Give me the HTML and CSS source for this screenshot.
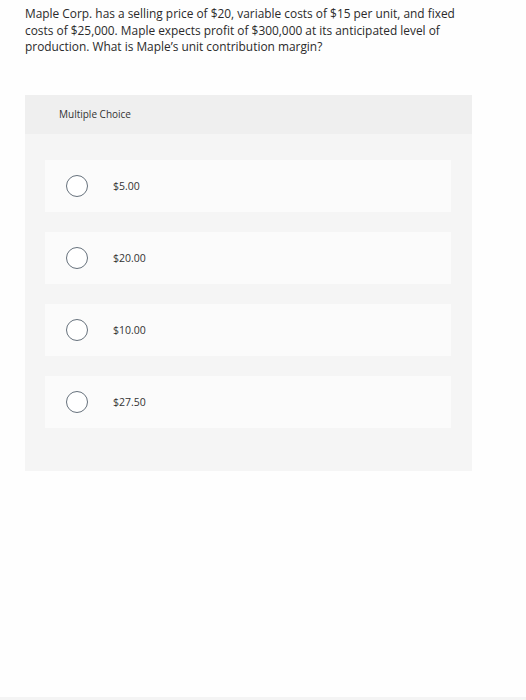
FILE: index.html
```html
<!DOCTYPE html>
<html>
<head>
<meta charset="utf-8">
<link rel="stylesheet" href="styles.css">
</head>
<body>
<div class="page">
  <p class="question">Maple Corp. has a selling price of $20, variable costs of $15 per unit, and fixed costs of $25,000. Maple expects profit of $300,000 at its anticipated level of production. What is Maple’s unit contribution margin?</p>
  <div class="panel">
    <div class="panel-head">Multiple Choice</div>
    <div class="options">
      <div class="option"><span class="radio"></span><span class="label">$5.00</span></div>
      <div class="option"><span class="radio"></span><span class="label">$20.00</span></div>
      <div class="option"><span class="radio"></span><span class="label">$10.00</span></div>
      <div class="option"><span class="radio"></span><span class="label">$27.50</span></div>
    </div>
  </div>
</div>
<div class="footer-line"></div>
</body>
</html>
```

FILE: styles.css
```css
html, body {
  margin: 0;
  padding: 0;
  background: #fefefe;
}
body {
  height: 700px;
  display: flex;
  flex-direction: column;
  font-family: "Open Sans", "Liberation Sans", sans-serif;
  color: #333;
}
.page {
  flex: 1;
  padding: 5px 0 0 25px;
  box-sizing: border-box;
}
.question {
  margin: 0;
  width: 445px;
  font-size: 11.9px;
  line-height: 16.5px;
  color: #2b2b2b;
}
.panel {
  margin-top: 40px;
  width: 447px;
  background: #f5f5f5;
  padding-bottom: 43px;
}
.panel-head {
  height: 39px;
  background: #efefef;
  font-size: 10px;
  color: #333;
  padding-left: 34px;
  display: flex;
  align-items: center;
}
.options {
  padding: 26px 21px 0 20px;
  display: flex;
  flex-direction: column;
  gap: 20px;
}
.option {
  height: 52px;
  background: #fbfbfb;
  display: flex;
  align-items: center;
  padding-left: 21px;
}
.radio {
  width: 20px;
  height: 20px;
  border: 1.2px solid #66717c;
  border-radius: 50%;
  background: #fff;
  flex: none;
}
.label {
  margin-left: 25px;
  font-size: 10.5px;
  color: #333;
}
.footer-line {
  height: 3px;
  background: #f4f4f4;
}
```
